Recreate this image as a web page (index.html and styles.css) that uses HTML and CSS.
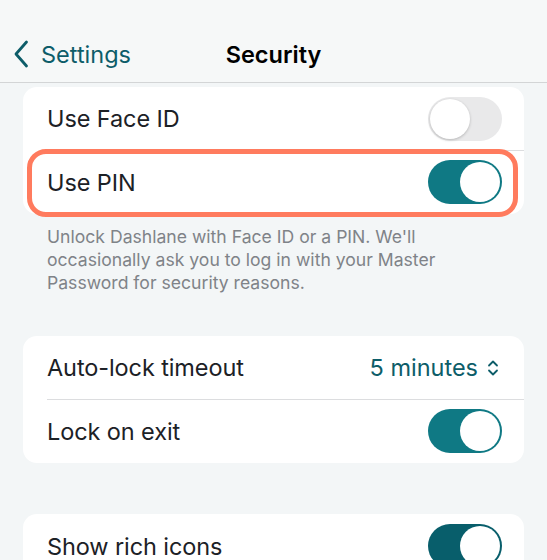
FILE: index.html
```html
<!DOCTYPE html>
<html lang="en">
<head>
    <meta charset="UTF-8">
    <meta name="viewport" content="width=device-width, initial-scale=1.0">
    <title>Security</title>
    <link rel="stylesheet" href="styles.css">
</head>
<body>
    <header class="navbar">
        <a class="back" href="#">
            <svg class="back-chevron" width="16" height="28" viewBox="0 0 16 28">
                <path d="M13.5 2 L3 14 L13.5 26" fill="none" stroke="#0d5d69" stroke-width="2.8" stroke-linecap="round" stroke-linejoin="round"/>
            </svg>
            <span>Settings</span>
        </a>
        <h1 class="title">Security</h1>
        <span></span>
    </header>

    <main class="content">
        <section class="card first">
            <div class="row">
                <span class="label">Use Face ID</span>
                <span class="toggle off"><span class="knob"></span></span>
            </div>
            <div class="row highlighted">
                <span class="label">Use PIN</span>
                <span class="toggle"><span class="knob"></span></span>
            </div>
        </section>
        <p class="note">Unlock Dashlane with Face ID or a PIN. We'll occasionally ask you to log in with your Master Password for security reasons.</p>

        <section class="card">
            <div class="row">
                <span class="label">Auto-lock timeout</span>
                <span class="value">5 minutes
                    <svg width="12" height="18" viewBox="0 0 12 18">
                        <path d="M2 6.5 L6 2.5 L10 6.5 M2 11.5 L6 15.5 L10 11.5" fill="none" stroke="#0d5d69" stroke-width="1.8" stroke-linecap="round" stroke-linejoin="round"/>
                    </svg>
                </span>
            </div>
            <div class="row">
                <span class="label">Lock on exit</span>
                <span class="toggle"><span class="knob"></span></span>
            </div>
        </section>

        <section class="card last">
            <div class="row">
                <span class="label">Show rich icons</span>
                <span class="toggle dark"><span class="knob"></span></span>
            </div>
        </section>
    </main>
</body>
</html>
```

FILE: styles.css
```css
body {
    margin: 0;
    font-family: Inter, "Noto Sans", sans-serif;
    background-color: #f3f6f7;
    color: #1c2126;
    overflow: hidden;
}
.navbar {
    height: 83px;
    background-color: #f6f8f8;
    border-bottom: 1px solid #d3d5d6;
    display: grid;
    grid-template-columns: 1fr auto 1fr;
    align-items: center;
    padding-top: 26px;
    box-sizing: border-box;
}
.back {
    display: flex;
    align-items: center;
    gap: 12px;
    padding-left: 13px;
    color: #0d5d69;
    text-decoration: none;
    font-size: 23.5px;
}
.title {
    margin: 0;
    font-size: 23.5px;
    font-weight: 600;
    color: #000;
}
.content {
    padding: 4px 23px 0;
}
.card {
    background-color: white;
    border-radius: 14px;
}
.row {
    position: relative;
    height: 63px;
    display: flex;
    align-items: center;
    justify-content: space-between;
    padding: 0 22px 0 24px;
}
.row + .row::before {
    content: "";
    position: absolute;
    top: 0;
    left: 24px;
    right: 0;
    border-top: 1px solid #dcdddf;
}
.card .row:last-child {
    height: 64px;
}
.label {
    font-size: 23.5px;
    letter-spacing: -0.1px;
}
.highlighted::after {
    content: "";
    position: absolute;
    top: -1px;
    bottom: -3px;
    left: 4px;
    right: 6px;
    border: 5px solid #ff7b5e;
    border-radius: 19px;
}
.toggle {
    width: 74px;
    height: 44px;
    border-radius: 22px;
    background-color: #0f7984;
    position: relative;
    box-sizing: border-box;
}
.toggle .knob {
    position: absolute;
    top: 2px;
    right: 2px;
    width: 40px;
    height: 40px;
    border-radius: 50%;
    background-color: white;
}
.toggle.off {
    background-color: #e9e9ea;
}
.toggle.off .knob {
    right: auto;
    left: 2px;
    box-shadow: 0 1px 3px rgba(0, 0, 0, 0.22);
}
.toggle.dark {
    background-color: #085e6b;
}
.note {
    margin: 11px 0 0;
    padding: 0 24px;
    font-size: 17.6px;
    line-height: 23px;
    color: #7f8388;
}
.card + .note + .card {
    margin-top: 42px;
}
.value {
    display: flex;
    align-items: center;
    gap: 9px;
    color: #0d5d69;
    font-size: 23.5px;
    padding-right: 3px;
}
.last {
    margin-top: 51px;
}
```
